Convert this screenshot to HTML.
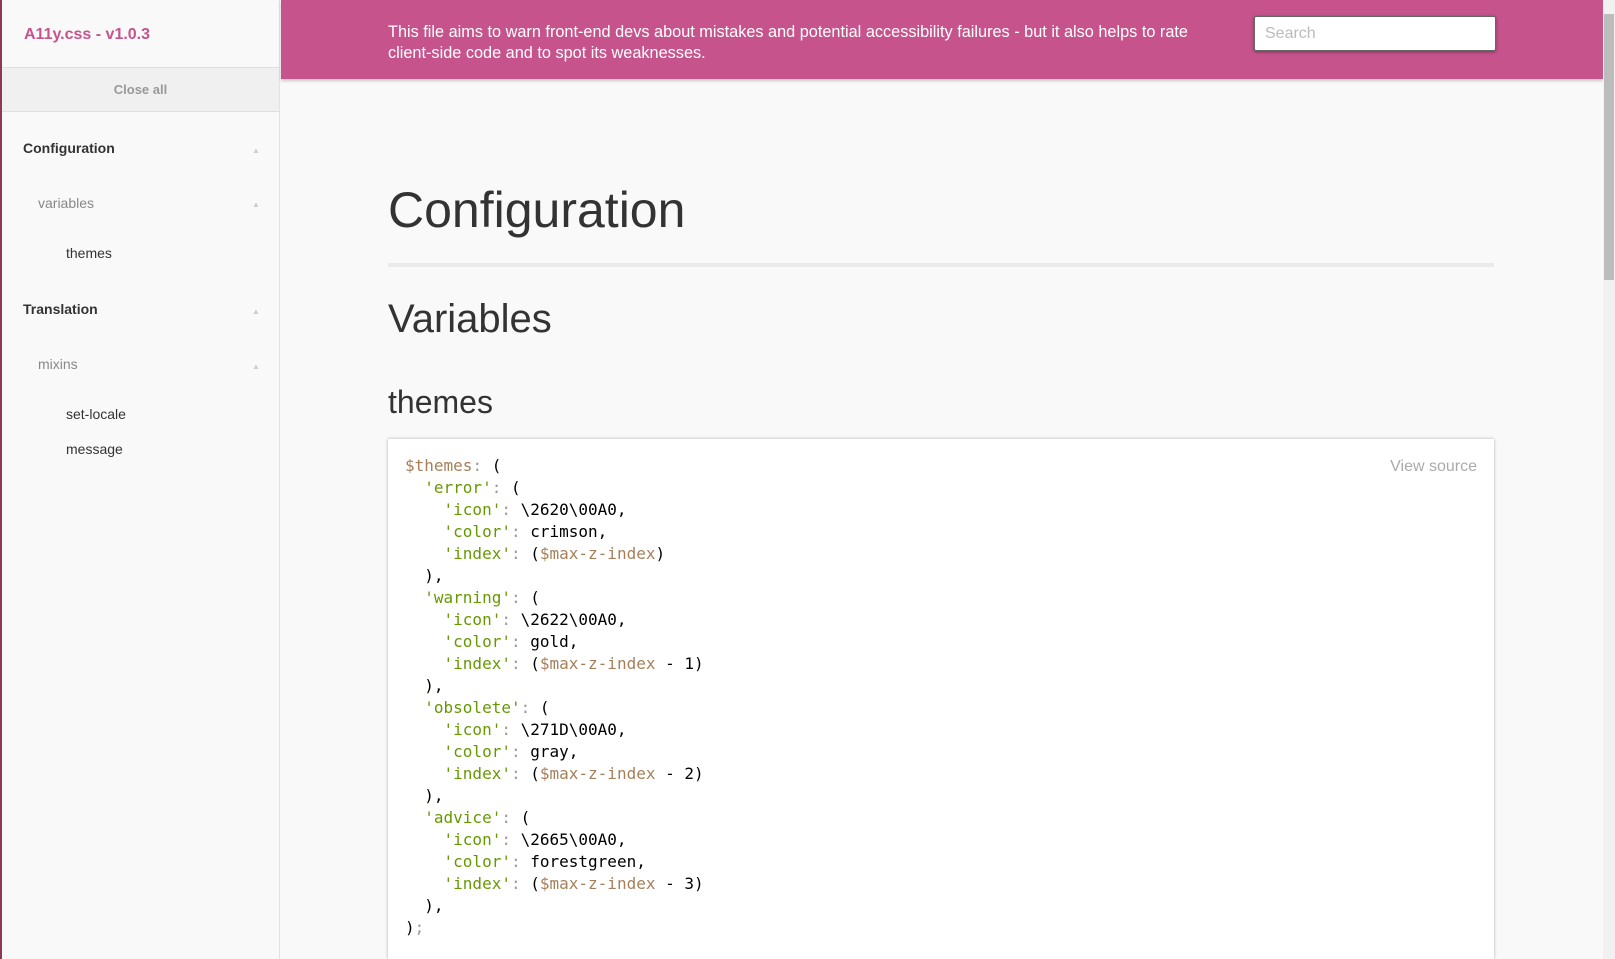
<!DOCTYPE html>
<html><head><meta charset="utf-8"><style>
body{margin:0;width:1615px;height:959px;overflow:hidden;background:#f9f9f9;font-family:"Liberation Sans",sans-serif;position:relative}
.side{position:absolute;left:0;top:0;width:280px;height:959px;background:#f9f9f9;border-left:2px solid #8c3b4f;border-right:1px solid #e2e2e2;box-sizing:border-box}
.logo{position:absolute;left:22px;top:26px;font-weight:bold;font-size:16px;color:#c6538c}
.close{position:absolute;left:0;right:0;top:67px;height:43px;background:#f0f0f0;border-top:1px solid #e0e0e0;border-bottom:1px solid #e0e0e0;text-align:center;line-height:43px;font-size:13px;font-weight:bold;color:#999}
.it{position:absolute;font-size:14px;color:#333}
.b{font-weight:bold;left:21px}
.m{left:36px;color:#888}
.l{left:64px}
.tri{position:absolute;left:250px;font-size:8px;color:#ccc}
.hdr{position:absolute;left:281px;top:0;width:1322px;height:79px;background:#c6538c;box-shadow:0 2px 3px rgba(0,0,0,.2)}
.hdr p{position:absolute;left:107px;top:22px;margin:0;width:830px;color:#fff;font-size:16.3px;line-height:21px}
.search{position:absolute;left:973px;top:16px;width:230px;height:33px;background:#fff;border:1px solid #666;border-radius:2px;box-shadow:0 1px 3px rgba(0,0,0,.4);font-size:16px;color:#bbb;line-height:33px;padding-left:10px;box-sizing:content-box}
.sb{position:absolute;left:1603px;top:0;width:12px;height:959px;background:#f1f1f1}
.sb div{position:absolute;left:1px;top:14px;width:10px;height:266px;background:#bcbcbc}
h1,h2,h3{position:absolute;left:388px;margin:0;font-weight:normal;color:#333}
h1{top:181px;font-size:50px}
.hr{position:absolute;left:388px;top:263px;width:1106px;height:4px;background:#eaeaea}
h2{top:297px;font-size:40px}
h3{top:384px;font-size:32px}
.code{position:absolute;left:388px;top:439px;width:1106px;height:520px;background:#fff;box-shadow:0 0 3px rgba(0,0,0,.3)}
pre{margin:0;position:absolute;left:17px;top:16px;font-family:"DejaVu Sans Mono",monospace;font-size:16px;line-height:22px;color:#000}
.v{color:#a67f59}.s{color:#690}.p{color:#999}
.vs{position:absolute;right:17px;top:19px;font-size:16px;color:#aaa}
</style></head><body>
<div class="side">
<div class="logo">A11y.css - v1.0.3</div>
<div class="close">Close all</div>
<div class="it b" style="top:140px">Configuration</div><div class="tri" style="top:146px">▲</div>
<div class="it m" style="top:195px">variables</div><div class="tri" style="top:200px">▲</div>
<div class="it l" style="top:245px">themes</div>
<div class="it b" style="top:301px">Translation</div><div class="tri" style="top:307px">▲</div>
<div class="it m" style="top:356px">mixins</div><div class="tri" style="top:362px">▲</div>
<div class="it l" style="top:406px">set-locale</div>
<div class="it l" style="top:441px">message</div>
</div>
<div class="hdr"><p>This file aims to warn front-end devs about mistakes and potential accessibility failures - but it also helps to rate client-side code and to spot its weaknesses.</p><div class="search">Search</div></div>
<div class="sb"><div></div></div>
<h1>Configuration</h1>
<div class="hr"></div>
<h2>Variables</h2>
<h3>themes</h3>
<div class="code"><div class="vs">View source</div>
<pre><span class="v">$themes</span><span class="p">:</span> (
  <span class="s">'error'</span><span class="p">:</span> (
    <span class="s">'icon'</span><span class="p">:</span> \2620\00A0,
    <span class="s">'color'</span><span class="p">:</span> crimson,
    <span class="s">'index'</span><span class="p">:</span> (<span class="v">$max-z-index</span>)
  ),
  <span class="s">'warning'</span><span class="p">:</span> (
    <span class="s">'icon'</span><span class="p">:</span> \2622\00A0,
    <span class="s">'color'</span><span class="p">:</span> gold,
    <span class="s">'index'</span><span class="p">:</span> (<span class="v">$max-z-index</span> - 1)
  ),
  <span class="s">'obsolete'</span><span class="p">:</span> (
    <span class="s">'icon'</span><span class="p">:</span> \271D\00A0,
    <span class="s">'color'</span><span class="p">:</span> gray,
    <span class="s">'index'</span><span class="p">:</span> (<span class="v">$max-z-index</span> - 2)
  ),
  <span class="s">'advice'</span><span class="p">:</span> (
    <span class="s">'icon'</span><span class="p">:</span> \2665\00A0,
    <span class="s">'color'</span><span class="p">:</span> forestgreen,
    <span class="s">'index'</span><span class="p">:</span> (<span class="v">$max-z-index</span> - 3)
  ),
)<span class="p">;</span></pre></div>
</body></html>
